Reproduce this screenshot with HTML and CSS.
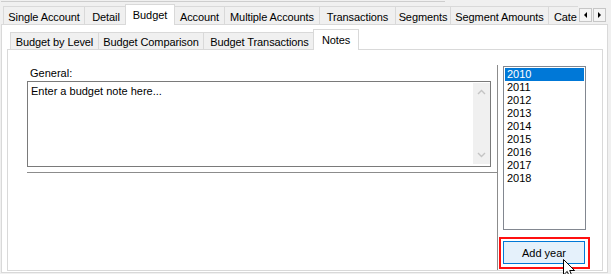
FILE: index.html
```html
<!DOCTYPE html>
<html lang="en">

<head>
    <meta charset="UTF-8">
    <title>Budget Notes</title>
    <link rel="stylesheet" href="styles.css">
</head>

<body>

    <div class="window">
        <div class="topline"></div>

        <!-- main tabs -->
        <div class="tabstrip main">
            <div class="tabs">
                <div class="tab">Single Account</div>
                <div class="tab">Detail</div>
                <div class="tab active">Budget</div>
                <div class="tab">Account</div>
                <div class="tab">Multiple Accounts</div>
                <div class="tab">Transactions</div>
                <div class="tab">Segments</div>
                <div class="tab">Segment Amounts</div>
                <div class="tab">Cate</div>
            </div>
            <div class="scroller">
                <div class="arrow"><span class="tri left"></span></div>
                <div class="arrow"><span class="tri right"></span></div>
            </div>
        </div>

        <div class="panel">
            <!-- budget sub tabs -->
            <div class="tabstrip sub">
                <div class="tabs">
                    <div class="tab">Budget by Level</div>
                    <div class="tab">Budget Comparison</div>
                    <div class="tab">Budget Transactions</div>
                    <div class="tab active">Notes</div>
                </div>
            </div>

            <div class="subpanel">
                <div class="note-col">
                    <div class="label">General:</div>
                    <div class="textbox">
                        <div class="text">Enter a budget note here...</div>
                        <div class="vscroll">
                            <svg width="9" height="6" viewBox="0 0 9 6"><path d="M1 5 L4.5 1.5 L8 5" fill="none" stroke="#c4c4c4" stroke-width="1.4"/></svg>
                            <svg width="9" height="6" viewBox="0 0 9 6"><path d="M1 1 L4.5 4.5 L8 1" fill="none" stroke="#c4c4c4" stroke-width="1.4"/></svg>
                        </div>
                    </div>
                    <div class="rule"></div>
                </div>

                <div class="year-col">
                    <div class="listbox">
                        <div class="item selected">2010</div>
                        <div class="item">2011</div>
                        <div class="item">2012</div>
                        <div class="item">2013</div>
                        <div class="item">2014</div>
                        <div class="item">2015</div>
                        <div class="item">2016</div>
                        <div class="item">2017</div>
                        <div class="item">2018</div>
                    </div>
                    <div class="highlight">
                        <button class="btn">Add year</button>
                    </div>
                </div>
            </div>
        </div>

        <!-- mouse pointer over the button -->
        <svg class="cursor" width="13" height="20" viewBox="0 0 13 20">
            <path d="M0.5 0.5 L0.5 16 L4.2 12.4 L7 18.8 L9.4 17.8 L6.7 11.5 L11.6 11.5 Z" fill="#fff" stroke="#000" stroke-width="1"/>
        </svg>
    </div>

</body>

</html>
```

FILE: styles.css
```css
body {
    margin: 0;
    background: #fff;
    font-family: "Liberation Sans", Arial, sans-serif;
    font-size: 11px;
    color: #000;
}

.window {
    position: relative;
    width: 611px;
    height: 274px;
    overflow: hidden;
    background: #f0f0f0;
    display: flex;
    flex-direction: column;
    padding: 1px 3px 1px 1px;
    box-sizing: border-box;
}

.topline {
    width: 444px;
    height: 1px;
    background: #cdcdcd;
}

/* tabs */

.tabstrip {
    display: flex;
    margin-top: 2px;
    height: 21px;
    margin-bottom: -1px;
    position: relative;
    z-index: 1;
}

.tabs {
    flex: 1;
    display: flex;
    align-items: flex-end;
    padding-left: 2px;
    overflow: hidden;
    white-space: nowrap;
}

.tab {
    flex: none;
    height: 18px;
    box-sizing: border-box;
    padding: 2px 0 0;
    text-align: center;
    line-height: 16px;
    letter-spacing: -0.1px;
    margin-bottom: 1px;
    margin-right: -1px;
    background: #f0f0f0;
    border: 1px solid #d9d9d9;
    border-bottom: none;
}

.tab.active {
    position: relative;
    z-index: 2;
    height: 21px;
    padding-top: 1px;
    line-height: 18px;
    margin: 0 -2px 0 -2px;
    background: #fff;
}

.tab.active + .tab {
    margin-left: 1px;
}

/* tab widths as laid out by the control */
.main .tab:nth-child(1) { width: 82px; }
.main .tab:nth-child(2) { width: 44px; }
.main .tab:nth-child(3) { width: 50px; }
.main .tab:nth-child(4) { width: 51px; }
.main .tab:nth-child(5) { width: 96px; }
.main .tab:nth-child(6) { width: 77px; }
.main .tab:nth-child(7) { width: 56px; }
.main .tab:nth-child(8) { width: 99px; }
.main .tab:nth-child(9) { width: 40px; text-align: left; padding-left: 5px; }

.scroller {
    display: flex;
    align-self: flex-start;
    margin: 4px 2px 0 0;
}

.arrow {
    width: 13px;
    height: 14px;
    box-sizing: border-box;
    border: 1px solid #c6c6c6;
    background: #f4f4f4;
    display: flex;
    align-items: center;
    justify-content: center;
    margin-left: 1px;
}

.tri {
    width: 0;
    height: 0;
    border-top: 3px solid transparent;
    border-bottom: 3px solid transparent;
}

.tri.left {
    border-right: 3px solid #000;
}

.tri.right {
    border-left: 3px solid #000;
}

.panel {
    flex: 1;
    display: flex;
    flex-direction: column;
    background: #fff;
    border: 1px solid #d9d9d9;
    padding: 0 4px 1px 5px;
}

.tabstrip.sub {
    margin-top: 4px;
}

.sub .tabs {
    padding-left: 3px;
}

.sub .tab {
    height: 17px;
    padding-top: 3px;
    line-height: 13px;
}

.sub .tab.active {
    height: 21px;
    padding-top: 4px;
    line-height: 13px;
}

.sub .tab:nth-child(1) { width: 89px; }
.sub .tab:nth-child(2) { width: 106px; }
.sub .tab:nth-child(3) { width: 113px; }
.sub .tab:nth-child(4) { width: 46px; }

.subpanel {
    flex: 1;
    display: flex;
    border: 1px solid #d9d9d9;
    padding: 15px 0 0 19px;
}

/* notes */

.note-col {
    width: 471px;
    box-sizing: border-box;
    border-right: 1px solid #8c8c8c;
}

.label {
    padding: 2px 0 1px 3px;
    line-height: 13px;
}

.textbox {
    width: 464px;
    height: 86px;
    box-sizing: border-box;
    border: 1px solid #7a7a7a;
    display: flex;
}

.text {
    flex: 1;
    padding: 3px 0 0 3px;
    line-height: 13px;
}

.vscroll {
    width: 17px;
    margin: 1px 0 2px;
    background: #f0f0f0;
    display: flex;
    flex-direction: column;
    justify-content: space-between;
    align-items: center;
    padding: 6px 0 6px;
    box-sizing: border-box;
}

.rule {
    height: 1px;
    margin-top: 5px;
    background: #8c8c8c;
}

.year-col {
    padding-left: 5px;
}

.listbox {
    width: 83px;
    height: 164px;
    margin-top: 1px;
    box-sizing: border-box;
    border: 1px solid #828790;
    padding: 1px;
}

.item {
    height: 13px;
    line-height: 13px;
    padding-left: 2px;
}

.item.selected {
    background: #0078d7;
    color: #fff;
}

.highlight {
    width: 91px;
    margin: 7px 0 0 -4px;
    box-sizing: border-box;
    border: 2px solid #ff1010;
    padding: 2px 2px 3px;
}

.btn {
    display: block;
    width: 82px;
    height: 23px;
    border: 1px solid #0078d7;
    background: #e5f1fb;
    font-family: inherit;
    font-size: 11px;
    color: #000;
    padding: 0;
}

.cursor {
    position: absolute;
    left: 563px;
    top: 259px;
}
```
